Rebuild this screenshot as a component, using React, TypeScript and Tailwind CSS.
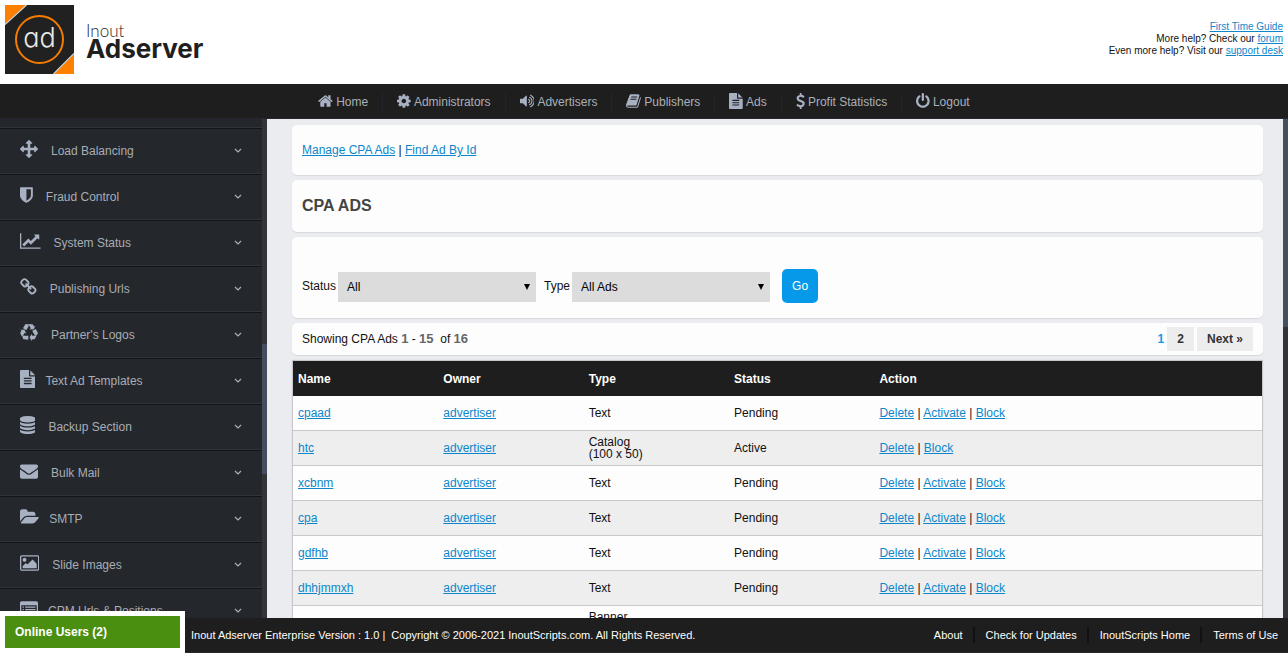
import type { ReactNode } from "react";

interface Glyph {
  box: string;
  d: string;
}

const glyphs: Record<string, Glyph> = {
  home: {
    box: "64 0 1664 1792",
    d: "M1472 992v480q0 26-19 45t-45 19h-384v-384h-256v384h-384q-26 0-45-19t-19-45v-480q0-1 .5-3t.5-3l575-474 575 474q1 2 1 6zm223-69l-62 74q-8 9-21 11h-3q-13 0-21-7l-692-577-692 577q-12 8-24 7-13-2-21-11l-62-74q-8-10-7-23.5t11-21.5l719-599q32-26 76-26t76 26l244 204v-195q0-14 9-23t23-9h192q14 0 23 9t9 23v408l219 182q10 8 11 21.5t-7 23.5z",
  },
  cog: {
    box: "128 0 1536 1792",
    d: "M1152 896q0-106-75-181t-181-75-181 75-75 181 75 181 181 75 181-75 75-181zm512-109v222q0 12-8 23t-20 13l-185 28q-19 54-39 91 35 50 107 138 10 12 10 25t-9 23q-27 37-99 108t-94 71q-12 0-26-9l-138-108q-44 23-91 38-16 136-29 186-7 28-36 28h-222q-14 0-24.5-8.5t-11.5-21.5l-28-184q-49-16-90-37l-141 107q-10 9-25 9-14 0-25-11-126-114-165-168-7-10-7-23 0-12 8-23 15-21 51-66.5t54-70.5q-27-50-41-99l-183-27q-13-2-21-12.5t-8-23.5v-222q0-12 8-23t19-13l186-28q14-46 39-92-40-57-107-138-10-12-10-24 0-10 9-23 26-36 98.5-107.5t94.5-71.5q13 0 26 10l138 107q44-23 91-38 16-136 29-186 7-28 36-28h222q14 0 24.5 8.5t11.5 21.5l28 184q49 16 90 37l142-107q9-9 24-9 13 0 25 10 129 119 165 170 7 8 7 22 0 12-8 23-15 21-51 66.5t-54 70.5q26 50 41 98l183 28q13 2 21 12.5t8 23.5z",
  },
  volume: {
    box: "64 0 1664 1792",
    d: "M832 352v1088q0 26-19 45t-45 19-45-19l-333-333h-262q-26 0-45-19t-19-45v-384q0-26 19-45t45-19h262l333-333q19-19 45-19t45 19 19 45zm384 544q0 76-42.5 141.5t-112.5 93.5q-10 5-25 5-26 0-45-18.5t-19-45.5q0-21 12-35.5t29-25 34-23 29-36 12-56.5-12-56.5-29-36-34-23-29-25-12-35.5q0-27 19-45.5t45-18.5q15 0 25 5 70 27 112.5 93t42.5 142zm256 0q0 153-85 282.5t-225 188.5q-13 5-25 5-27 0-46-19t-19-45q0-39 39-59 56-29 76-44 74-54 115.5-135.5t41.5-173.5-41.5-173.5-115.5-135.5q-20-15-76-44-39-20-39-59 0-26 19-45t45-19q13 0 26 5 140 59 225 188.5t85 282.5zm256 0q0 230-127 422.5t-338 283.5q-13 5-26 5-26 0-45-19t-19-45q0-36 39-59 7-4 22.5-10.5t22.5-10.5q46-25 82-51 123-91 192-227t69-289-69-289-192-227q-36-26-82-51-7-4-22.5-10.5t-22.5-10.5q-39-23-39-59 0-26 19-45t45-19q13 0 26 5 211 91 338 283.5t127 422.5z",
  },
  book: {
    box: "64 0 1664 1792",
    d: "M1703 478q40 57 18 129l-275 906q-19 64-76.5 107.5t-122.5 43.5h-923q-77 0-148.5-53.5t-99.5-131.5q-24-67-2-127 0-4 3-27t4-37q1-8-3-21.5t-3-19.5q2-11 8-21t16.5-23.5 16.5-23.5q23-38 45-91.5t30-91.5q3-10 .5-30t-.5-28q3-11 17-28t17-23q21-36 42-92t25-90q1-9-2.5-32t.5-28q4-13 22-30.5t22-22.5q19-26 42.5-84.5t27.5-96.5q1-8-3-25.5t-2-26.5q2-8 9-18t18-23 17-21q8-12 16.5-30.5t15-35 16-36 19.5-32 26.5-23.5 36-11.5 47.5 5.5l-1 3q38-9 51-9h761q74 0 114 56t18 130l-274 906q-36 119-71.5 153.5t-128.5 34.5h-869q-27 0-38 15-11 16-1 43 24 70 144 70h923q29 0 56-15.5t35-41.5l300-987q7-22 5-57 38 15 59 43zm-1064 2q-4 13 2 22.5t20 9.5h608q13 0 25.5-9.5t16.5-22.5l21-64q4-13-2-22.5t-20-9.5h-608q-13 0-25.5 9.5t-16.5 22.5zm-83 256q-4 13 2 22.5t20 9.5h608q13 0 25.5-9.5t16.5-22.5l21-64q4-13-2-22.5t-20-9.5h-608q-13 0-25.5 9.5t-16.5 22.5z",
  },
  file: {
    box: "128 0 1536 1792",
    d: "M1596 476q14 14 28 36h-472v-472q22 14 36 28zm-476 164h544v1056q0 40-28 68t-68 28h-1344q-40 0-68-28t-28-68v-1600q0-40 28-68t68-28h800v544q0 40 28 68t68 28zm160 736v-64q0-14-9-23t-23-9h-704q-14 0-23 9t-9 23v64q0 14 9 23t23 9h704q14 0 23-9t9-23zm0-256v-64q0-14-9-23t-23-9h-704q-14 0-23 9t-9 23v64q0 14 9 23t23 9h704q14 0 23-9t9-23zm0-256v-64q0-14-9-23t-23-9h-704q-14 0-23 9t-9 23v64q0 14 9 23t23 9h704q14 0 23-9t9-23z",
  },
  dollar: {
    box: "384 0 1024 1792",
    d: "M1362 1185q0 153-99.5 263.5t-258.5 136.5v175q0 14-9 23t-23 9h-135q-13 0-22.5-9.5t-9.5-22.5v-175q-66-9-127.5-31t-101.5-44.5-74-48-46.5-37.5-17.5-18q-17-21-2-41l103-135q7-10 23-12 15-2 24 9l2 2q113 99 243 125 37 8 74 8 81 0 142.5-43t61.5-122q0-28-15-53t-33.5-42-58.5-37.5-66-32-80-32.5q-39-16-61.5-25t-61.5-26.5-62.5-31-56.5-35.5-53.5-42.5-43.5-49-35.5-58-21-66.5-8.5-78q0-138 98-242t255-134v-180q0-13 9.5-22.5t22.5-9.5h135q14 0 23 9t9 23v176q57 6 110.5 23t87 33.5 63.5 37.5 39 29 15 14q17 18 5 38l-81 146q-8 15-23 16-14 3-27-7-3-3-14.5-12t-39-26.5-58.5-32-74.5-26-85.5-11.5q-95 0-155 43t-60 111q0 26 8.5 48t29.5 41.5 39.5 33 56 31 60.5 27 70 27.5q53 20 81 31.5t76 35 75.5 42.5 62 50 53 63.5 31.5 76.5 13 94z",
  },
  power: {
    box: "128 0 1536 1792",
    d: "M1664 896q0 156-61 298t-164 245-245 164-298 61-298-61-245-164-164-245-61-298q0-182 80.5-343t226.5-270q43-32 95.5-25t83.5 50q32 42 24.5 94.5t-49.5 84.5q-98 74-151.5 181t-53.5 228q0 104 40.5 198.5t109.5 163.5 163.5 109.5 198.5 40.5 198.5-40.5 163.5-109.5 109.5-163.5 40.5-198.5q0-121-53.5-228t-151.5-181q-42-32-49.5-84.5t24.5-94.5q31-43 84-50t95 25q146 109 226.5 270t80.5 343zm-640-768v640q0 52-38 90t-90 38-90-38-38-90v-640q0-52 38-90t90-38 90 38 38 90z",
  },
  arrows: {
    box: "0 0 1792 1792",
    d: "M1792 896q0 26-19 45l-256 256q-19 19-45 19t-45-19-19-45v-128h-384v384h128q26 0 45 19t19 45-19 45l-256 256q-19 19-45 19t-45-19l-256-256q-19-19-19-45t19-45 45-19h128v-384h-384v128q0 26-19 45t-45 19-45-19l-256-256q-19-19-19-45t19-45l256-256q19-19 45-19t45 19 19 45v128h384v-384h-128q-26 0-45-19t-19-45 19-45l256-256q19-19 45-19t45 19l256 256q19 19 19 45t-19 45-45 19h-128v384h384v-128q0-26 19-45t45-19 45 19l256 256q19 19 19 45z",
  },
  shield: {
    box: "256 0 1280 1792",
    d: "M1344 960v-640h-448v1137q119-63 213-137 235-184 235-360zm192-768v768q0 86-33.5 170.5t-83 150-118 127.5-126.5 103-121 77.5-89.5 49.5-42.5 20q-12 6-26 6t-26-6q-16-7-42.5-20t-89.5-49.5-121-77.5-126.5-103-118-127.5-83-150-33.5-170.5v-768q0-26 19-45t45-19h1152q26 0 45 19t19 45z",
  },
  chart: {
    box: "0 0 2048 1792",
    d: "M2048 1536v128h-2048v-1536h128v1408h1920zm-128-1248v435q0 21-19.5 29.5t-35.5-7.5l-121-121-633 633q-10 10-23 10t-23-10l-233-233-416 416-192-192 585-585q10-10 23-10t23 10l233 233 464-464-121-121q-16-16-7.5-35.5t29.5-19.5h435q14 0 23 9t9 23z",
  },
  chain: {
    box: "64 0 1664 1792",
    d: "M1520 1216q0-40-28-68l-208-208q-28-28-68-28-42 0-72 32 3 3 19 18.5t21.5 21.5 15 19 13 25.5 3.5 27.5q0 40-28 68t-68 28q-15 0-27.5-3.5t-25.5-13-19-15-21.5-21.5-18.5-19q-33 31-33 73 0 40 28 68l206 207q27 27 68 27 40 0 68-26l147-146q28-28 28-67zm-703-705q0-40-28-68l-206-207q-28-28-68-28-39 0-68 27l-147 146q-28 28-28 67 0 40 28 68l208 208q27 27 68 27 42 0 72-31-3-3-19-18.5t-21.5-21.5-15-19-13-25.5-3.5-27.5q0-40 28-68t68-28q15 0 27.5 3.5t25.5 13 19 15 21.5 21.5 18.5 19q33-31 33-73zm895 705q0 120-85 203l-147 146q-83 83-203 83-121 0-204-85l-206-207q-83-83-83-203 0-123 88-209l-88-88q-86 88-208 88-120 0-204-84l-208-208q-84-84-84-204t85-203l147-146q83-83 203-83 121 0 204 85l206 207q83 83 83 203 0 123-88 209l88 88q86-88 208-88 120 0 204 84l208 208q84 84 84 204z",
  },
  recycle: {
    box: "0 0 1792 1792",
    d: "M836 1169l-15 368-2 22-420-29q-36-3-67-31.5t-47-65.5q-11-27-14.5-55t4-65 12-55 21.5-64 19-53q78 12 509 28zm-387-586l180 379-147-92q-63 72-111.5 144.5t-72.500 125-39.500 94.500-18.500 63l-4 21-190-357q-17-26-18-56t6-47l8-18q35-63 114-188l-140-86zm1231 517l-188 359q-12 29-36.500 46.500t-43.500 20.500l-18 4q-71 7-219 12l8 164-230-367 211-362 7 173q170 16 283 5t170-33zm-785-924q-47 63-265 435l-317-187-19-12 225-356q20-31 60-45t80-10q24 2 48.500 12t42 21 41.500 33 36 34.500 36 39.500 32 35zm655 307l212 363q18 37 12.500 76t-27.500 74q-13 20-33 37t-38 28-48.500 22-47 16-51.500 14-46 12q-34-72-265-436l313-195zm-143-226l142-83-220 373-419-20 151-86q-34-89-75-166t-75.500-123.500-64.500-80-47-46.500l-17-13 405 1q31-3 58 10.500t39 28.500l11 15q39 61 112 190z",
  },
  database: {
    box: "128 0 1536 1792",
    d: "M896 768q237 0 443-43t325-127v170q0 69-103 128t-280 93.5-385 34.5-385-34.5-280-93.5-103-128v-170q119 84 325 127t443 43zm0 768q237 0 443-43t325-127v170q0 69-103 128t-280 93.5-385 34.5-385-34.5-280-93.5-103-128v-170q119 84 325 127t443 43zm0-384q237 0 443-43t325-127v170q0 69-103 128t-280 93.5-385 34.5-385-34.5-280-93.5-103-128v-170q119 84 325 127t443 43zm0-1152q208 0 385 34.5t280 93.5 103 128v128q0 69-103 128t-280 93.5-385 34.5-385-34.5-280-93.5-103-128v-128q0-69 103-128t280-93.5 385-34.5z",
  },
  envelope: {
    box: "0 0 1792 1792",
    d: "M1792 710v794q0 66-47 113t-113 47h-1472q-66 0-113-47t-47-113v-794q44 49 101 87 362 246 497 345 57 42 92.5 65.5t94.5 48 110 24.5h2q51 0 110-24.5t94.5-48 92.5-65.5q170-123 498-345 57-39 100-87zm0-294q0 79-49 151t-122 123q-376 261-468 325-10 7-42.5 31t-54 38.5-52 32.5-57.5 27-50 9h-2q-23 0-50-9t-57.5-27-52-32.5-54-38.5-42.5-31q-91-64-262-182.5t-205-142.5q-62-42-117-115.5t-55-136.5q0-78 41.5-130t118.5-52h1472q65 0 112.5 47t47.5 113z",
  },
  folder: {
    box: "-64 0 1920 1792",
    d: "M1815 952q0 31-31 66l-336 396q-43 51-120.5 86.5t-143.5 35.5h-1088q-34 0-60.5-13t-26.5-43q0-31 31-66l336-396q43-51 120.5-86.5t143.5-35.5h1088q34 0 60.5 13t26.5 43zm-343-344v160h-832q-94 0-197 47.5t-164 119.5l-337 396-5 6q0-4-.5-12.5t-.5-12.5v-960q0-92 66-158t158-66h320q92 0 158 66t66 158v32h544q92 0 158 66t66 158z",
  },
  picture: {
    box: "-64 0 1920 1792",
    d: "M576 576q0 80-56 136t-136 56-136-56-56-136 56-136 136-56 136 56 56 136zm1024 384v448h-1408v-192l320-320 160 160 512-512zm96-704h-1600q-13 0-22.5 9.5t-9.5 22.5v1216q0 13 9.5 22.5t22.5 9.5h1600q13 0 22.5-9.5t9.5-22.5v-1216q0-13-9.5-22.5t-22.5-9.5zm160 32v1216q0 66-47 113t-113 47h-1600q-66 0-113-47t-47-113v-1216q0-66 47-113t113-47h1600q66 0 113 47t47 113z",
  },
  list: {
    box: "0 0 1792 1792",
    d: "M160 128h1472q66 0 113 47t47 113v1216q0 66-47 113t-113 47h-1472q-66 0-113-47t-47-113v-1216q0-66 47-113t113-47zm-32 384v960q0 64 32 64h1472q32 0 32-64v-960zm128 128h128v128h-128zm256 0h1024v128h-1024zm-256 256h128v128h-128zm256 0h1024v128h-1024zm-256 256h128v128h-128zm256 0h1024v128h-1024z",
  },
};

function Icon({ name, className }: { name: string; className: string }) {
  const { box, d } = glyphs[name];
  return (
    <svg viewBox={box} className={`w-auto shrink-0 ${className}`} fill="currentColor" fillRule="evenodd" aria-hidden="true">
      <path d={d} />
    </svg>
  );
}

const topMenu = [
  { icon: "home", label: "Home" },
  { icon: "cog", label: "Administrators" },
  { icon: "volume", label: "Advertisers" },
  { icon: "book", label: "Publishers" },
  { icon: "file", label: "Ads" },
  { icon: "dollar", label: "Profit Statistics" },
  { icon: "power", label: "Logout" },
];

const sideMenu = [
  { icon: "arrows", label: "Load Balancing", gap: "gap-[13px]" },
  { icon: "shield", label: "Fraud Control", gap: "gap-[13px]" },
  { icon: "chart", label: "System Status", gap: "gap-[13px]" },
  { icon: "chain", label: "Publishing Urls", gap: "gap-[13px]" },
  { icon: "recycle", label: "Partner's Logos", gap: "gap-[13px]" },
  { icon: "file", label: "Text Ad Templates", gap: "gap-[10px]" },
  { icon: "database", label: "Backup Section", gap: "gap-[13px]" },
  { icon: "envelope", label: "Bulk Mail", gap: "gap-[13px]" },
  { icon: "folder", label: "SMTP", gap: "gap-[10px]" },
  { icon: "picture", label: "Slide Images", gap: "gap-[13px]" },
  { icon: "list", label: "CPM Urls & Positions", gap: "gap-[10px]" },
];

const ads = [
  { name: "cpaad", type: "Text", status: "Pending" },
  { name: "htc", type: "Catalog", size: "(100 x 50)", status: "Active" },
  { name: "xcbnm", type: "Text", status: "Pending" },
  { name: "cpa", type: "Text", status: "Pending" },
  { name: "gdfhb", type: "Text", status: "Pending" },
  { name: "dhhjmmxh", type: "Text", status: "Pending" },
];

const footerLinks = ["About", "Check for Updates", "InoutScripts Home", "Terms of Use"];

function Link({ children }: { children: ReactNode }) {
  return (
    <a href="#" className="text-[#0d86ca] underline">
      {children}
    </a>
  );
}

function Card({ className, children }: { className: string; children: ReactNode }) {
  return (
    <section className={`flex items-center rounded-[5px] bg-[#fdfdfd] px-[10px] shadow-[0_1px_1px_rgba(0,0,0,0.08)] ${className}`}>
      {children}
    </section>
  );
}

function Logo() {
  return (
    <a href="#" className="flex items-center gap-[12px] text-[#1f1f1f]">
      <svg viewBox="0 0 69 69" className="size-[69px]" aria-hidden="true">
        <path fill="#212121" d="M0 0h69v69H0z" />
        <path fill="#ff8000" d="M0 0h21L0 19z" />
        <path fill="#ff8000" d="M69 49v20H49z" />
        <path stroke="#d8d8d8" strokeWidth="1.2" d="M21.5 0L0 19.5M69 48.5L48.5 69" />
        <circle cx="34.5" cy="34.5" r="23.5" fill="none" stroke="#f57c00" strokeWidth="2" />
        <text
          x="34.5"
          y="41.5"
          textAnchor="middle"
          fill="#e8e8e8"
          className="font-['Inter',sans-serif] text-[27px] font-light [font-feature-settings:'cv11']"
        >
          ad
        </text>
      </svg>
      <span className="flex flex-col">
        <span className="font-['Lato',sans-serif] text-[17px] font-light leading-[18px]">Inout</span>
        <span className="font-['Inter',sans-serif] text-[26px] font-bold leading-[18px]">Adserver</span>
      </span>
    </a>
  );
}

function Header() {
  return (
    <header className="flex h-[84px] shrink-0 justify-between bg-white px-[5px] pt-[5px]">
      <div className="flex items-start">
        <Logo />
      </div>
      <p className="pt-4 text-right text-[10px] leading-[12px]">
        <Link>First Time Guide</Link>
        <br />
        More help? Check our <Link>forum</Link>
        <br />
        Even more help? Visit our <Link>support desk</Link>
      </p>
    </header>
  );
}

function TopMenu() {
  return (
    <nav className="flex h-[35px] shrink-0 items-center justify-center border-b border-[#262630] bg-[#1e1e1e] pt-[2px] text-[#a7b1c2]">
      {topMenu.map((item, i) => (
        <a
          key={item.label}
          href="#"
          className={`flex items-center gap-[3px] px-[14px] ${i > 0 ? "border-l border-[#22252b]" : ""}`}
        >
          <Icon name={item.icon} className="mb-[3px] h-4" />
          <span className="text-[#abb0b8]">{item.label}</span>
        </a>
      ))}
    </nav>
  );
}

function Sidebar() {
  return (
    <aside className="flex w-[267px] shrink-0 overflow-hidden bg-[#24272c]">
      <nav className="flex-1">
        <div className="h-[9px] border-b border-[#303338]" />
        {sideMenu.map((item) => (
          <a
            key={item.label}
            href="#"
            className="flex h-[46px] items-center justify-between border-t border-b border-t-[#121417] border-b-[#303338] px-5 text-[#a7b1c2]"
          >
            <span className={`flex items-center ${item.gap}`}>
              <Icon name={item.icon} className="mb-1 h-[18px]" />
              <span className="text-[#a9adb5]">{item.label}</span>
            </span>
            <svg viewBox="0 0 8 6" className="h-[6px] w-2" fill="none" stroke="currentColor" strokeWidth="1.2" aria-hidden="true">
              <path d="M1 1l3 3 3-3" />
            </svg>
          </a>
        ))}
      </nav>
      <div className="flex w-[5px] flex-col bg-[#333438]">
        <div className="mt-[225px] h-[130px] bg-[#464d60]" />
      </div>
    </aside>
  );
}

function Select({ id, label, options }: { id: string; label: string; options: string[] }) {
  return (
    <div className="flex items-center gap-[2px]">
      <label htmlFor={id}>{label}</label>
      <span className="relative mt-0.5">
        <select id={id} className="block h-[30px] w-[198px] appearance-none bg-[#dcdcdc] px-[9px] text-black">
          {options.map((option) => (
            <option key={option}>{option}</option>
          ))}
        </select>
        <svg viewBox="0 0 6 6" className="pointer-events-none absolute top-3 right-[6px] size-[6px]" aria-hidden="true">
          <path d="M0 0h6L3 6z" />
        </svg>
      </span>
    </div>
  );
}

function Cell({ children }: { children?: ReactNode }) {
  return <td className="border-b border-[#c8c8c8] pl-[5px]">{children}</td>;
}

function AdsTable() {
  return (
    <div className="mx-px mt-px bg-[#fdfdfd] shadow-[0_0_1px_1px_rgba(0,0,0,0.15)]">
      <table className="w-full table-fixed border-separate border-spacing-0 text-left leading-[12px]">
        <thead>
          <tr className="h-[35px] bg-[#1e1e1e] text-white">
            <th className="w-[15%] pl-[5px]">Name</th>
            <th className="w-[15%] pl-[5px]">Owner</th>
            <th className="w-[15%] pl-[5px]">Type</th>
            <th className="w-[15%] pl-[5px]">Status</th>
            <th className="pl-[5px]">Action</th>
          </tr>
        </thead>
        <tbody>
          {ads.map((ad) => (
            <tr key={ad.name} className="h-[35px] even:bg-[#eeeeee]">
              <Cell>
                <Link>{ad.name}</Link>
              </Cell>
              <Cell>
                <Link>advertiser</Link>
              </Cell>
              <Cell>
                {ad.type}
                {ad.size && (
                  <>
                    <br />
                    {ad.size}
                  </>
                )}
              </Cell>
              <Cell>{ad.status}</Cell>
              <Cell>
                <Link>Delete</Link> |{" "}
                {ad.status === "Pending" && (
                  <>
                    <Link>Activate</Link> |{" "}
                  </>
                )}
                <Link>Block</Link>
              </Cell>
            </tr>
          ))}
          <tr className="h-[35px]">
            <Cell />
            <Cell />
            <Cell>
              Banner
              <br />
              &nbsp;
            </Cell>
            <Cell />
            <Cell />
          </tr>
        </tbody>
      </table>
    </div>
  );
}

function Content() {
  return (
    <main className="flex min-w-0 flex-1 flex-col gap-[5px] overflow-hidden bg-[#ebecf0] pt-[6px] pr-5 pl-[25px]">
      <Card className="h-[50px] shrink-0">
        <p>
          <Link>Manage CPA Ads</Link> | <Link>Find Ad By Id</Link>
        </p>
      </Card>
      <Card className="h-[52px] shrink-0">
        <h1 className="text-[16px] font-bold text-[#444444]">CPA ADS</h1>
      </Card>
      <Card className="h-[81px] shrink-0 pt-[17px]">
        <form className="flex items-center gap-3">
          <div className="flex gap-2">
            <Select id="status" label="Status" options={["All", "Active", "Pending", "Blocked"]} />
            <Select id="type" label="Type" options={["All Ads", "Text", "Banner", "Catalog"]} />
          </div>
          <button type="button" className="h-[34px] rounded-[5px] bg-[#0799e9] px-[10px] text-white">
            Go
          </button>
        </form>
      </Card>
      <Card className="h-8 shrink-0 justify-between">
        <p>
          Showing CPA Ads <b className="text-[13px] text-[#666666]">1</b> -{" "}
          <b className="text-[13px] text-[#666666]">15</b> &nbsp;of <b className="text-[13px] text-[#666666]">16</b>
        </p>
        <div className="flex items-center gap-[3px] font-bold leading-6">
          <span className="text-[#1199ee]">1</span>
          <a href="#" className="bg-[#ededed] px-[10px] text-[#333333]">
            2
          </a>
          <a href="#" className="bg-[#ededed] px-[10px] text-[#333333]">
            Next »
          </a>
        </div>
      </Card>
      <AdsTable />
    </main>
  );
}

function Footer() {
  return (
    <footer className="relative flex h-[35px] shrink-0 items-center justify-between border-b border-[#24292f] bg-[#1e1e1e] pr-[10px] pl-[191px] text-[11px] text-white">
      <button
        type="button"
        className="absolute -bottom-px left-0 h-[42px] w-[185px] border-5 border-white bg-[#4a8f10] pl-[10px] text-left text-[12px] font-bold"
      >
        Online Users (2)
      </button>
      <p>Inout Adserver Enterprise Version : 1.0 | &nbsp;Copyright © 2006-2021 InoutScripts.com. All Rights Reserved.</p>
      <div className="flex">
        {footerLinks.map((label, i) => (
          <a key={label} href="#" className={i > 0 ? "ml-[10px] border-l-2 border-[#111111] pl-[11px]" : ""}>
            {label}
          </a>
        ))}
      </div>
    </footer>
  );
}

export default function App() {
  return (
    <div className="flex h-screen flex-col overflow-hidden font-['Liberation_Sans',Arial,sans-serif] text-[12px] leading-[16px] text-[#111111]">
      <Header />
      <TopMenu />
      <div className="flex min-h-0 flex-1">
        <Sidebar />
        <Content />
        <div className="w-[5px] shrink-0 bg-[#323339]">
          <div className="h-[208px] bg-[#464f5d]" />
        </div>
      </div>
      <Footer />
    </div>
  );
}
